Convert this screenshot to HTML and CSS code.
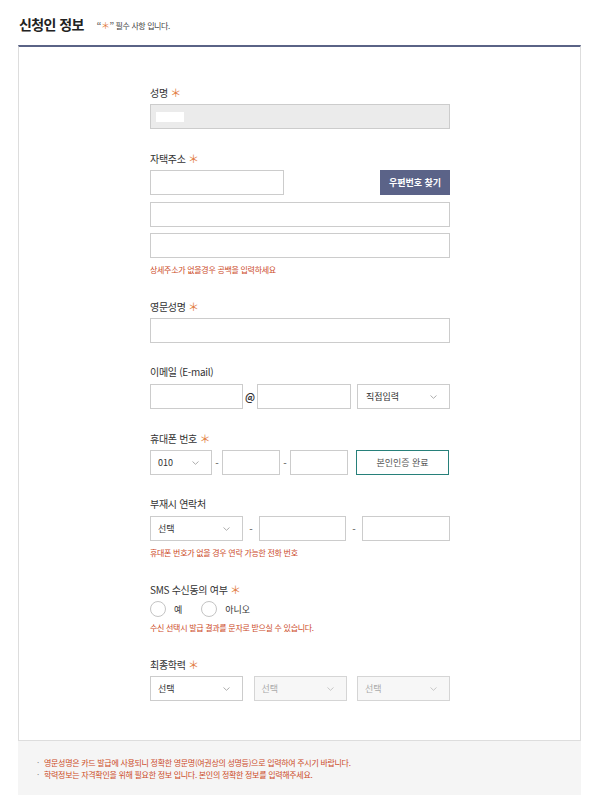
FILE: index.html
```html
<!DOCTYPE html>
<html lang="ko">
<head>
    <meta charset="UTF-8">
    <meta name="viewport" content="width=device-width, initial-scale=1.0">
    <title>신청인 정보</title>
    <link rel="stylesheet" href="styles.css">
</head>
<body>
<div class="page">
    <div class="title-row">
        <h2 class="title">신청인 정보</h2>
        <span class="title-note"><span class="quote">“</span><span class="req">＊</span><span class="quote">”</span> 필수 사항 입니다.</span>
    </div>

    <div class="card">
        <div class="form">
            <!-- 성명 -->
            <div class="field">
                <div class="label">성명 <span class="req">＊</span></div>
                <div class="input readonly"><span class="mask"></span></div>
            </div>

            <!-- 자택주소 -->
            <div class="field">
                <div class="label">자택주소 <span class="req">＊</span></div>
                <div class="row between">
                    <div class="input zip"></div>
                    <button class="zip-btn">우편번호 찾기</button>
                </div>
                <div class="input addr1"></div>
                <div class="input addr2"></div>
                <p class="help">상세주소가 없을경우 공백을 입력하세요</p>
            </div>

            <!-- 영문성명 -->
            <div class="field">
                <div class="label">영문성명 <span class="req">＊</span></div>
                <div class="input"></div>
            </div>

            <!-- 이메일 -->
            <div class="field">
                <div class="label">이메일 (E-mail)</div>
                <div class="row">
                    <div class="input email-id"></div>
                    <span class="at">@</span>
                    <div class="input email-domain"></div>
                    <div class="select email-select">
                        <span>직접입력</span>
                        <svg class="chev" width="7" height="4" viewBox="0 0 7 4"><path d="M0.5 0.5L3.5 3.3L6.5 0.5" fill="none" stroke="#999" stroke-width="0.8"/></svg>
                    </div>
                </div>
            </div>

            <!-- 휴대폰 번호 -->
            <div class="field">
                <div class="label">휴대폰 번호 <span class="req">＊</span></div>
                <div class="row">
                    <div class="select phone-select">
                        <span>010</span>
                        <svg class="chev" width="7" height="4" viewBox="0 0 7 4"><path d="M0.5 0.5L3.5 3.3L6.5 0.5" fill="none" stroke="#999" stroke-width="0.8"/></svg>
                    </div>
                    <span class="dash">-</span>
                    <div class="input phone-mid"></div>
                    <span class="dash">-</span>
                    <div class="input phone-last"></div>
                    <button class="auth-btn">본인인증 완료</button>
                </div>
            </div>

            <!-- 부재시 연락처 -->
            <div class="field">
                <div class="label">부재시 연락처</div>
                <div class="row">
                    <div class="select tel-select">
                        <span>선택</span>
                        <svg class="chev" width="7" height="4" viewBox="0 0 7 4"><path d="M0.5 0.5L3.5 3.3L6.5 0.5" fill="none" stroke="#999" stroke-width="0.8"/></svg>
                    </div>
                    <span class="dash wide">-</span>
                    <div class="input tel-mid"></div>
                    <span class="dash wide">-</span>
                    <div class="input tel-last"></div>
                </div>
                <p class="help">휴대폰 번호가 없을 경우 연락 가능한 전화 번호</p>
            </div>

            <!-- SMS 수신동의 -->
            <div class="field">
                <div class="label">SMS 수신동의 여부 <span class="req">＊</span></div>
                <div class="radios">
                    <label class="radio"><span class="circle"></span>예</label>
                    <label class="radio"><span class="circle"></span>아니오</label>
                </div>
                <p class="help tight">수신 선택시 발급 결과를 문자로 받으실 수 있습니다.</p>
            </div>

            <!-- 최종학력 -->
            <div class="field">
                <div class="label">최종학력 <span class="req">＊</span></div>
                <div class="row between">
                    <div class="select edu">
                        <span>선택</span>
                        <svg class="chev" width="7" height="4" viewBox="0 0 7 4"><path d="M0.5 0.5L3.5 3.3L6.5 0.5" fill="none" stroke="#999" stroke-width="0.8"/></svg>
                    </div>
                    <div class="select edu disabled">
                        <span>선택</span>
                        <svg class="chev" width="7" height="4" viewBox="0 0 7 4"><path d="M0.5 0.5L3.5 3.3L6.5 0.5" fill="none" stroke="#bbb" stroke-width="0.8"/></svg>
                    </div>
                    <div class="select edu disabled">
                        <span>선택</span>
                        <svg class="chev" width="7" height="4" viewBox="0 0 7 4"><path d="M0.5 0.5L3.5 3.3L6.5 0.5" fill="none" stroke="#bbb" stroke-width="0.8"/></svg>
                    </div>
                </div>
            </div>
        </div>
    </div>

    <div class="notes">
        <p>영문성명은 카드 발급에 사용되니 정확한 영문명(여권상의 성명등)으로 입력하여 주시기 바랍니다.</p>
        <p>학력정보는 자격확인을 위해 필요한 정보 입니다. 본인의 정확한 정보를 입력해주세요.</p>
    </div>
</div>
</body>
</html>
```

FILE: styles.css
```css
body {
    margin: 0;
    font-family: "Noto Sans CJK KR", "Noto Sans", sans-serif;
    background-color: #fff;
    color: #333;
}

.page {
    padding: 0 21px 0 18px;
}

.title-row {
    height: 45px;
    display: flex;
    align-items: center;
    padding-left: 1px;
    padding-top: 2px;
    box-sizing: border-box;
}

.title {
    margin: 0;
    font-size: 14px;
    font-weight: bold;
    color: #222;
    letter-spacing: -0.6px;
}

.title-note {
    margin-left: 13px;
    margin-top: 3px;
    font-size: 8px;
    color: #444;
    letter-spacing: -0.4px;
}

.title-note .quote {
    color: #666;
    font-weight: bold;
}

.title-note .req {
    font-size: 9px;
}

.req {
    color: #e27b3e;
    font-size: 11px;
}

.card {
    border-top: 2px solid #5a6386;
    border-left: 1px solid #ddd;
    border-right: 1px solid #ddd;
    border-bottom: 1px solid #ddd;
    padding: 38px 0 39px;
}

.form {
    width: 300px;
    margin-left: 131px;
}

.field + .field {
    margin-top: 22px;
}

.label {
    font-size: 10px;
    line-height: 14px;
    height: 14px;
    margin-bottom: 5px;
    color: #333;
    letter-spacing: -0.3px;
}

.input,
.select {
    height: 25px;
    box-sizing: border-box;
    border: 1px solid #ccc;
    background-color: #fff;
}

.input.readonly {
    background-color: #ebebeb;
    display: flex;
    align-items: center;
    padding-left: 5px;
}

.mask {
    display: block;
    width: 28px;
    height: 10px;
    background-color: #fff;
}

.row {
    display: flex;
    align-items: center;
}

.row.between {
    justify-content: space-between;
}

.input.zip {
    width: 134px;
}

.zip-btn {
    width: 70px;
    height: 25px;
    border: none;
    background-color: #5b6388;
    color: #fff;
    font-family: inherit;
    font-size: 9px;
    font-weight: bold;
    padding: 0;
    cursor: pointer;
}

.input.addr1 {
    margin-top: 7px;
}

.input.addr2 {
    margin-top: 6px;
}

.help {
    margin: 5px 0 0;
    font-size: 8px;
    line-height: 14px;
    color: #cc4a1f;
    letter-spacing: -0.3px;
}

.help.tight {
    margin-top: 4px;
}

.select {
    display: flex;
    align-items: center;
    justify-content: space-between;
    padding: 0 12px 0 7px;
    font-size: 9px;
    color: #333;
}

.select.disabled {
    background-color: #f7f7f7;
    color: #aaa;
    border-color: #d5d5d5;
}

.chev {
    display: block;
}

.input.email-id {
    width: 93px;
}

.at {
    width: 14px;
    text-align: center;
    font-size: 10px;
    font-weight: bold;
    color: #333;
}

.input.email-domain {
    width: 94px;
}

.select.email-select {
    width: 93px;
    margin-left: 6px;
    padding-left: 8px;
}

.select.phone-select {
    width: 62px;
}

.dash {
    width: 10px;
    text-align: center;
    font-size: 10px;
    color: #555;
}

.dash.wide {
    width: 16px;
}

.input.phone-mid {
    width: 58px;
}

.input.phone-last {
    width: 58px;
}

.auth-btn {
    width: 93px;
    height: 25px;
    margin-left: 8px;
    box-sizing: border-box;
    border: 1px solid #27807a;
    background-color: #fff;
    color: #555;
    font-family: inherit;
    font-size: 9px;
    padding: 0;
    cursor: pointer;
}

.select.tel-select {
    width: 93px;
}

.input.tel-mid {
    width: 87px;
}

.input.tel-last {
    width: 88px;
}

.radios {
    display: flex;
    align-items: center;
    height: 16px;
}

.radio {
    display: flex;
    align-items: center;
    font-size: 9px;
    color: #333;
    margin-right: 19px;
}

.circle {
    width: 16px;
    height: 16px;
    box-sizing: border-box;
    border: 1px solid #c4c4c4;
    border-radius: 50%;
    background-color: #fff;
    margin-right: 8px;
}

.select.edu {
    width: 93px;
}

.notes {
    background-color: #f5f5f5;
    padding: 16px 0 20px 19px;
}

.notes p {
    margin: 0;
    font-size: 8px;
    line-height: 12px;
    color: #cc4a1f;
    letter-spacing: -0.3px;
}

.notes p::before {
    content: "·";
    color: #888;
    display: inline-block;
    width: 7px;
}
```
